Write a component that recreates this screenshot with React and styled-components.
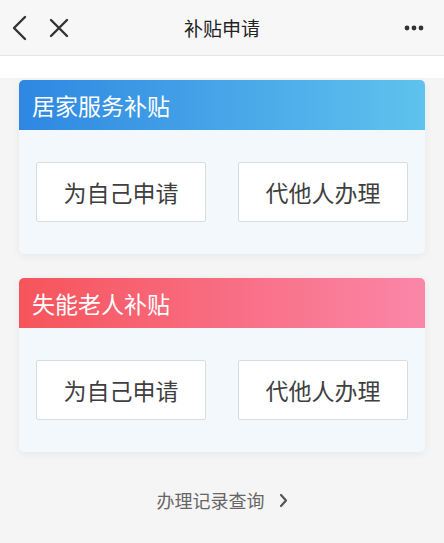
import React from "react";
import styled, { createGlobalStyle } from "styled-components";

const Global = createGlobalStyle`
  html, body { margin: 0; padding: 0; background: #f5f5f5; }
  body { font-family: "Noto Sans CJK SC", "Noto Sans", sans-serif; }
`;

const Page = styled.div`
  width: 444px;
  min-height: 543px;
  background: #f5f5f5;
`;

const TopBar = styled.div`
  height: 56px;
  background: #f7f7f7;
  border-bottom: 1px solid #e4e4e4;
  display: grid;
  grid-template-columns: 100px 1fr 100px;
  align-items: center;
  box-sizing: border-box;
`;

const NavLeft = styled.div`
  display: flex;
  align-items: center;
  gap: 22px;
  padding-left: 11px;
`;

const NavRight = styled.div`
  display: flex;
  justify-content: flex-end;
  padding-right: 20px;
`;

const Title = styled.div`
  text-align: center;
  font-size: 19px;
  color: #222;
`;

const Main = styled.div`
  background: linear-gradient(to bottom, #ffffff 0, #ffffff 22px, #f5f5f5 22px);
  padding: 24px 19px 40px;
  display: flex;
  flex-direction: column;
  gap: 24px;
`;

const Card = styled.div`
  border-radius: 5px;
  overflow: hidden;
  background: #f2f8fc;
  box-shadow: 0 2px 8px rgba(0, 0, 0, 0.06);
`;

const CardHead = styled.div`
  height: 50px;
  display: flex;
  align-items: center;
  padding-left: 13px;
  font-size: 23px;
  color: #fff;
  background: ${(p) => p.$bg};
`;

const CardBody = styled.div`
  display: grid;
  grid-template-columns: 170px 170px;
  justify-content: space-between;
  padding: 32px 17px;
`;

const Btn = styled.div`
  height: 60px;
  box-sizing: border-box;
  background: #fff;
  border: 1px solid #d6dee4;
  border-radius: 2px;
  display: flex;
  align-items: center;
  justify-content: center;
  font-size: 23px;
  color: #3f3f3f;
`;

const Footer = styled.div`
  display: flex;
  justify-content: center;
  align-items: center;
  gap: 14px;
  margin-top: 11px;
  font-size: 18px;
  color: #666;
`;

const cards = [
  { title: "居家服务补贴", bg: "linear-gradient(to right, #2f87e1, #5ec3ee)" },
  { title: "失能老人补贴", bg: "linear-gradient(to right, #f6545b, #fa86a8)" },
];

export default function App() {
  return (
    <Page>
      <Global />
      <TopBar>
        <NavLeft>
          <svg width="16" height="26" viewBox="0 0 16 26">
            <path d="M14 2 L3 13 L14 24" fill="none" stroke="#333" strokeWidth="2.4" strokeLinecap="round" strokeLinejoin="round" />
          </svg>
          <svg width="20" height="20" viewBox="0 0 20 20">
            <path d="M2 2 L18 18 M18 2 L2 18" fill="none" stroke="#333" strokeWidth="2.4" strokeLinecap="round" />
          </svg>
        </NavLeft>
        <Title>补贴申请</Title>
        <NavRight>
          <svg width="20" height="6" viewBox="0 0 20 6">
            <circle cx="3" cy="3" r="2.4" fill="#333" />
            <circle cx="10" cy="3" r="2.4" fill="#333" />
            <circle cx="17" cy="3" r="2.4" fill="#333" />
          </svg>
        </NavRight>
      </TopBar>
      <Main>
        {cards.map((c) => (
          <Card key={c.title}>
            <CardHead $bg={c.bg}>{c.title}</CardHead>
            <CardBody>
              <Btn>为自己申请</Btn>
              <Btn>代他人办理</Btn>
            </CardBody>
          </Card>
        ))}
        <Footer>
          <span>办理记录查询</span>
          <svg width="9" height="15" viewBox="0 0 9 15">
            <path d="M2 2 L7 7.5 L2 13" fill="none" stroke="#555" strokeWidth="2.2" strokeLinecap="round" strokeLinejoin="round" />
          </svg>
        </Footer>
      </Main>
    </Page>
  );
}
